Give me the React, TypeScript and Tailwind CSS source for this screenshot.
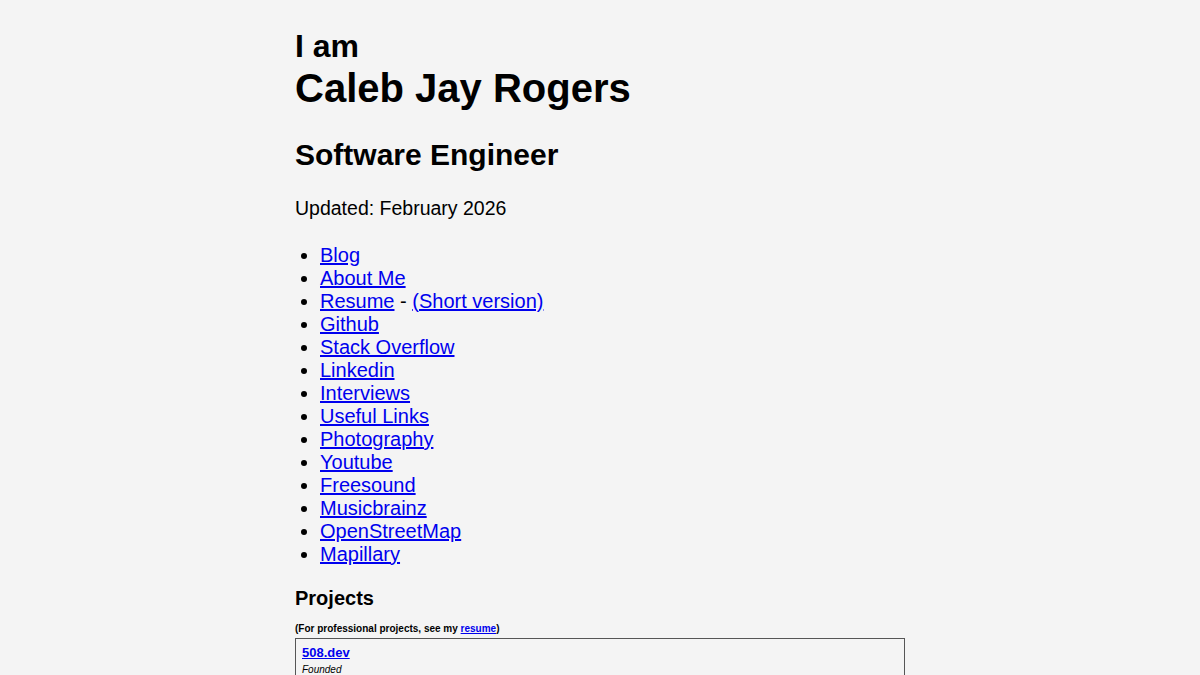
import React from 'react';

const LINKS: { label: string; extra?: string }[] = [
  { label: 'Blog' },
  { label: 'About Me' },
  { label: 'Resume', extra: '(Short version)' },
  { label: 'Github' },
  { label: 'Stack Overflow' },
  { label: 'Linkedin' },
  { label: 'Interviews' },
  { label: 'Useful Links' },
  { label: 'Photography' },
  { label: 'Youtube' },
  { label: 'Freesound' },
  { label: 'Musicbrainz' },
  { label: 'OpenStreetMap' },
  { label: 'Mapillary' },
];

const PROJECTS = [
  { name: '508.dev', role: 'Founded', text: 'A software engineering co-op of senior engineers building products for clients.' },
  { name: 'Project Archive', role: 'Built', text: 'Smaller side projects and experiments.' },
];

export default function App() {
  return (
    <div className="min-h-screen bg-[#f4f4f4] font-['Liberation_Sans',Arial,sans-serif] text-black">
      <main className="mx-auto w-[610px] pt-[28px] pb-10">
        <h1 className="font-bold">
          <div className="text-[32px] leading-[1.15]">I am</div>
          <div className="text-[40px] leading-[1.15]">Caleb Jay Rogers</div>
        </h1>
        <h2 className="mt-[27px] text-[30px] font-bold leading-[1.15]">Software Engineer</h2>
        <p className="mt-[25px] text-[19.5px] leading-[1.15]">Updated: February 2026</p>

        <ul className="mt-[24px] list-disc pl-[25px] text-[20px] leading-[23px]">
          {LINKS.map((link) => (
            <li key={link.label}>
              <a href="#" className="text-[#0000ee] underline">{link.label}</a>
              {link.extra && (
                <>
                  {' - '}
                  <a href="#" className="text-[#0000ee] underline">{link.extra}</a>
                </>
              )}
            </li>
          ))}
        </ul>

        <h3 className="mt-[21px] text-[20px] font-bold leading-[1.15]">Projects</h3>
        <p className="mt-[13px] text-[10px] font-bold leading-[1.15]">
          (For professional projects, see my <a href="#" className="text-[#0000ee] underline">resume</a>)
        </p>

        <div className="mt-[4px] flex flex-col gap-2">
          {PROJECTS.map((p) => (
            <div key={p.name} className="border border-[#555] px-[6px] pt-[6px] pb-2">
              <a href="#" className="block text-[13px] font-bold leading-[15px] text-[#0000ee] underline">{p.name}</a>
              <div className="mt-[4px] text-[10px] italic leading-[1.15]">{p.role}</div>
              <p className="mt-1 text-[11px] leading-[1.3]">{p.text}</p>
            </div>
          ))}
        </div>
      </main>
    </div>
  );
}
